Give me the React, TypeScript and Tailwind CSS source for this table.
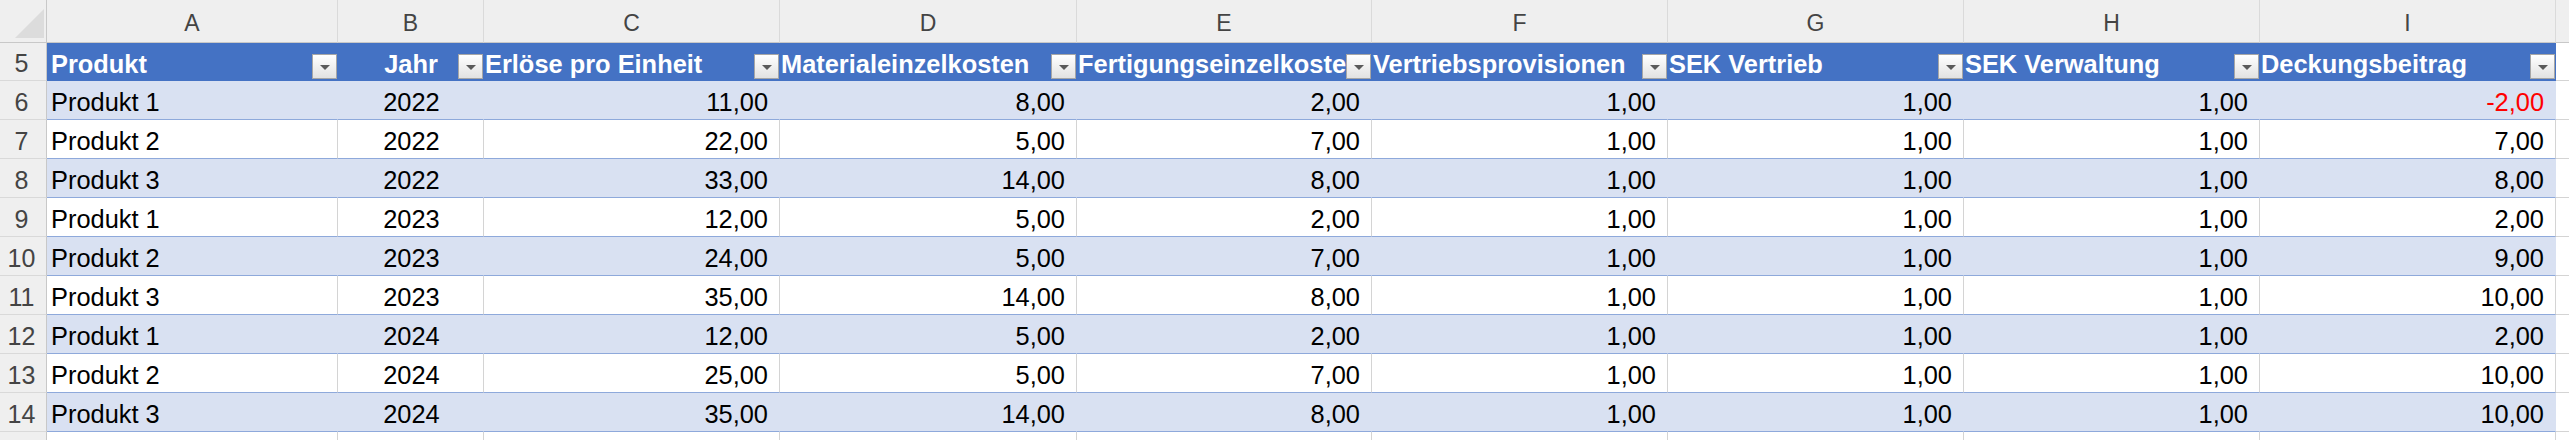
const cols = ['A', 'B', 'C', 'D', 'E', 'F', 'G', 'H', 'I']

const headers = [
  'Produkt',
  'Jahr',
  'Erlöse pro Einheit',
  'Materialeinzelkosten',
  'Fertigungseinzelkosten',
  'Vertriebsprovisionen',
  'SEK Vertrieb',
  'SEK Verwaltung',
  'Deckungsbeitrag',
]

const rows: Array<[string, number, string, string, string, string, string, string, string]> = [
  ['Produkt 1', 2022, '11,00', '8,00', '2,00', '1,00', '1,00', '1,00', '-2,00'],
  ['Produkt 2', 2022, '22,00', '5,00', '7,00', '1,00', '1,00', '1,00', '7,00'],
  ['Produkt 3', 2022, '33,00', '14,00', '8,00', '1,00', '1,00', '1,00', '8,00'],
  ['Produkt 1', 2023, '12,00', '5,00', '2,00', '1,00', '1,00', '1,00', '2,00'],
  ['Produkt 2', 2023, '24,00', '5,00', '7,00', '1,00', '1,00', '1,00', '9,00'],
  ['Produkt 3', 2023, '35,00', '14,00', '8,00', '1,00', '1,00', '1,00', '10,00'],
  ['Produkt 1', 2024, '12,00', '5,00', '2,00', '1,00', '1,00', '1,00', '2,00'],
  ['Produkt 2', 2024, '25,00', '5,00', '7,00', '1,00', '1,00', '1,00', '10,00'],
  ['Produkt 3', 2024, '35,00', '14,00', '8,00', '1,00', '1,00', '1,00', '10,00'],
]

const gridCols =
  'grid grid-cols-[47px_291px_146px_296px_297px_295px_296px_296px_296px_296px_13px]'

const FilterButton = () => (
  <div className="mb-[2px] mr-[1px] flex h-[25px] w-[25px] shrink-0 items-center justify-center border border-[#a6a6a6] bg-linear-to-b from-white to-[#e2e2e2]">
    <div className="mt-[1px] h-0 w-0 border-l-[5px] border-r-[5px] border-t-[5px] border-l-transparent border-r-transparent border-t-[#5a5a5a]" />
  </div>
)

const RowHeader = ({ n }: { n?: number }) => (
  <div className="flex items-end justify-center border-b border-r border-b-[#d9d9d9] border-r-[#c8c8c8] bg-[#efefef] pb-[3px] pr-[3px] text-[25px] leading-[28px] text-[#444]">
    {n}
  </div>
)

export default function App() {
  return (
    <div className="h-[440px] w-[2569px] overflow-hidden bg-white font-['Liberation_Sans',Arial,sans-serif]">
      {/* column letters */}
      <div className={`${gridCols} h-[43px]`}>
        <div className="relative border-b border-r border-[#c8c8c8] bg-[#efefef]">
          <svg className="absolute left-0 top-0" width="47" height="42" viewBox="0 0 47 42">
            <polygon points="15,38 44,38 44,9" fill="#dcdcdc" />
          </svg>
        </div>
        {cols.map((c) => (
          <div
            key={c}
            className="flex items-end justify-center border-b border-r border-b-[#c8c8c8] border-r-[#dadada] bg-[#efefef] pb-[6px] text-[23px] leading-[26px] text-[#444]"
          >
            {c}
          </div>
        ))}
        <div className="border-b border-[#c8c8c8] bg-[#efefef]" />
      </div>

      {/* table header row 5 */}
      <div className={`${gridCols} h-[38px]`}>
        <RowHeader n={5} />
        {headers.map((h, i) => (
          <div key={h} className="flex items-end overflow-hidden bg-[#4472c4] text-[25.4px] font-bold leading-[28px] text-white">
            <span
              className={`min-w-0 flex-1 overflow-hidden whitespace-nowrap pb-[3px] ${
                i === 0 ? 'pl-[4px]' : i === 1 ? 'pl-[26px] text-center' : 'pl-[1px]'
              }`}
            >
              {h}
            </span>
            <FilterButton />
          </div>
        ))}
        <div className="border-b border-[#d4d4d4] bg-white" />
      </div>

      {/* data rows */}
      {rows.map((r, ri) => {
        const band = ri % 2 === 0
        const cell = `flex items-end border-b border-r border-b-[#8ea9db] pb-[3px] text-[25.4px] leading-[28px] ${
          band ? 'bg-[#d9e1f2] border-r-transparent' : 'bg-white border-r-[#d4d4d4]'
        }`
        return (
          <div key={ri} className={`${gridCols} h-[39px]`}>
            <RowHeader n={ri + 6} />
            <div className={`${cell} pl-[4px] text-black`}>{r[0]}</div>
            <div className={`${cell} justify-center pl-[2px] text-black`}>{r[1]}</div>
            {r.slice(2).map((v, ci) => (
              <div
                key={ci}
                className={`${cell} justify-end pr-[11px] ${ci === 6 ? 'border-r-[#8ea9db]' : ''} ${
                  v.startsWith('-') ? 'text-[#ff0000]' : 'text-black'
                }`}
              >
                {v}
              </div>
            ))}
            <div className="border-b border-[#d4d4d4] bg-white" />
          </div>
        )
      })}

      {/* row 15, only its top edge is in view */}
      <div className={`${gridCols} h-[39px]`}>
        <RowHeader />
        {cols.map((c) => (
          <div key={c} className="border-b border-r border-[#d4d4d4] bg-white" />
        ))}
        <div className="border-b border-[#d4d4d4] bg-white" />
      </div>
    </div>
  )
}
